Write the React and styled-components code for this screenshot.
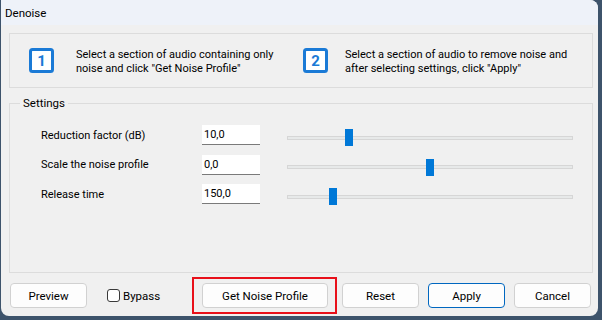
import React from "react";
import styled, { createGlobalStyle } from "styled-components";

const GlobalStyle = createGlobalStyle`
  html, body {
    margin: 0;
    padding: 0;
    background: #3d536b;
  }
  body {
    font-family: Roboto, "Noto Sans", sans-serif;
    font-size: 11px;
    color: #000;
  }
`;

const settings = [
  { label: "Reduction factor (dB)", value: "10,0", pos: 0.209 },
  { label: "Scale the noise profile", value: "0,0", pos: 0.5 },
  { label: "Release time", value: "150,0", pos: 0.151 },
];

const StepIcon = ({ n }) => (
  <svg width="25" height="25" viewBox="0 0 25 25">
    <rect x="1.5" y="1.5" width="22" height="22" rx="2" fill="#fff" stroke="#1a7ad6" strokeWidth="3" />
    <text
      x="12.5"
      y="18"
      textAnchor="middle"
      fontFamily="Roboto, sans-serif"
      fontWeight="700"
      fontSize="15"
      fill="#1a7ad6"
    >
      {n}
    </text>
  </svg>
);

const App = () => {
  return (
    <Wrapper>
      <GlobalStyle />
      <div className="window">
        <div className="titlebar">Denoise</div>
        <div className="body">
          <div className="steps">
            <Step gap={22}>
              <StepIcon n="1" />
              <p className="step_text">
                Select a section of audio containing only
                <br />
                noise and click "Get Noise Profile"
              </p>
            </Step>
            <Step gap={17}>
              <StepIcon n="2" />
              <p className="step_text">
                Select a section of audio to remove noise and
                <br />
                after selecting settings, click "Apply"
              </p>
            </Step>
          </div>

          <fieldset className="group">
            <legend className="group_label">Settings</legend>
            <div className="rows">
              {settings.map((s) => (
                <div className="row" key={s.label}>
                  <label className="row_label">{s.label}</label>
                  <input className="row_input" type="text" defaultValue={s.value} />
                  <div className="slider">
                    <div className="slider_track" />
                    <div
                      className="slider_thumb"
                      style={{ left: `calc(${s.pos} * (100% - 8px))` }}
                    />
                  </div>
                </div>
              ))}
            </div>
          </fieldset>

          <div className="footer">
            <Button>Preview</Button>
            <label className="check">
              <span className="check_box" />
              Bypass
            </label>
            <div className="highlight">
              <Button wide>Get Noise Profile</Button>
            </div>
            <Button className="reset">Reset</Button>
            <Button primary className="apply">Apply</Button>
            <Button className="cancel">Cancel</Button>
          </div>
        </div>
      </div>
    </Wrapper>
  );
};

const Step = styled.div`
  display: flex;
  align-items: center;
  gap: ${(p) => p.gap}px;
`;

const Button = styled.button`
  width: ${(p) => (p.wide ? "126px" : "77px")};
  height: 25px;
  flex: none;
  padding: 0;
  border-radius: 4px;
  border: 1px solid ${(p) => (p.primary ? "#0067c0" : "#d1d1d1")};
  background-color: #fdfdfd;
  font-family: inherit;
  font-size: 11.5px;
  color: #000;
  cursor: pointer;
`;

const Wrapper = styled.section`
  width: 602px;
  height: 320px;
  overflow: hidden;
  .window {
    width: 597px;
    height: 316px;
    margin-left: 1px;
    background: #f0f0f0;
    border-radius: 0 8px 8px 8px;
    overflow: hidden;
    display: flex;
    flex-direction: column;
  }
  .titlebar {
    height: 25px;
    line-height: 26px;
    padding-left: 4px;
    font-size: 11.5px;
    background: #eef2f9;
  }
  .body {
    flex: 1;
    padding: 8px 5px 0 8px;
    display: flex;
    flex-direction: column;
  }
  .steps {
    height: 53px;
    border: 1px solid #dcdcdc;
    display: grid;
    grid-template-columns: 274px 1fr;
    align-items: center;
    padding-left: 19px;
  }
  .step_text {
    margin: 0;
    line-height: 14px;
    margin-top: 2px;
  }
  .group {
    margin: 8px 0 0;
    padding: 0;
    height: 177px;
    box-sizing: border-box;
    border: 1px solid #dcdcdc;
    border-radius: 0;
    min-width: 0;
  }
  .group_label {
    margin-left: 10px;
    padding: 0 3px;
    font-size: 11.5px;
  }
  .rows {
    padding: 14px 0 0 31px;
    display: flex;
    flex-direction: column;
    gap: 9.5px;
  }
  .row {
    display: grid;
    grid-template-columns: 134px 58px 286px;
    column-gap: 27px;
    align-items: center;
    height: 20px;
  }
  .row_input {
    width: 58px;
    height: 20px;
    box-sizing: border-box;
    border: none;
    border-bottom: 1px solid #7a7a7a;
    background: #fff;
    padding: 0 2px;
    font-family: inherit;
    font-size: 11px;
    outline: none;
  }
  .slider {
    position: relative;
    height: 22px;
    padding-top: 5px;
    box-sizing: border-box;
    display: flex;
    align-items: center;
  }
  .slider_track {
    width: 100%;
    height: 4px;
    box-sizing: border-box;
    border: 1px solid #d6d6d6;
    background: #e7e9e9;
  }
  .slider_thumb {
    position: absolute;
    top: 5px;
    width: 8px;
    height: 17px;
    background: #0078d7;
  }
  .footer {
    display: flex;
    align-items: center;
    height: 37px;
    margin-top: 4px;
    padding-left: 1px;
  }
  .check {
    display: flex;
    align-items: center;
    gap: 3px;
    width: 85px;
    margin-left: 20px;
    box-sizing: border-box;
    font-size: 11.5px;
  }
  .check_box {
    width: 11px;
    height: 11px;
    border: 1px solid #3a3a3a;
    border-radius: 3px;
    background: #fff;
  }
  .highlight {
    padding: 4px 7px 4px 8px;
    border: 2px solid #e8101a;
    display: flex;
  }
  .reset {
    margin-left: 5px;
  }
  .apply,
  .cancel {
    margin-left: 9px;
  }
`;

export default App;
